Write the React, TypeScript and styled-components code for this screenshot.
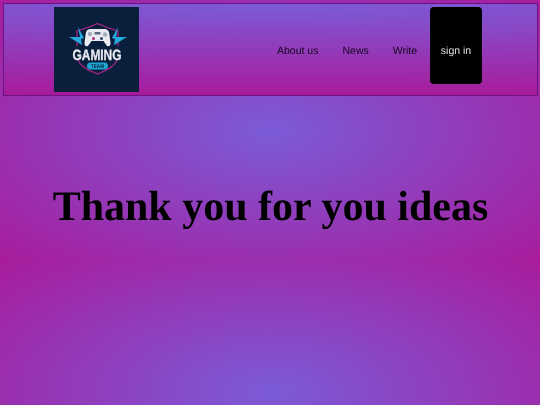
import styled, { createGlobalStyle } from "styled-components";

const GlobalStyle = createGlobalStyle`
	html {
		min-height: 100%;
		background: radial-gradient(ellipse farthest-corner at center, #7b5bd8, #a81c9c) 0 0 / 100% 261px;
	}
	body {
		margin: 3px 2px 3px 3px;
		font-family: "Liberation Sans", Arial, sans-serif;
		text-rendering: geometricPrecision;
	}
`;

const Logo = () => (
	<LogoSvg width="85" height="85" viewBox="0 0 85 85">
		<rect width="85" height="85" fill="#0a1f3c" />
		<path d="M23 39 V24 Q34 21 43.5 16.5 Q53 21 64 24 V39" fill="none" stroke="#b0268e" strokeWidth="1.2" />
		<path d="M24 53 Q27 61 43.5 67 Q60 61 63 53" fill="none" stroke="#b0268e" strokeWidth="1.2" />
		<path d="M24 20 L26 30 L15 30 L28 38 L27 32 L30 31 Z" fill="#25a9dc" />
		<path d="M64 20 L62 30 L73 30 L60 38 L61 32 L58 31 Z" fill="#25a9dc" />
		<path
			d="M36 22 H51 Q55 22 55.5 28 L56.5 36 Q56.5 40 53 39 L49.5 34 H37.5 L34 39 Q30.5 40 30.5 36 L31.5 28 Q32 22 36 22 Z"
			fill="#e9ebf0"
		/>
		<rect x="40.5" y="25" width="6" height="2.5" fill="#5a6a82" />
		<circle cx="36" cy="27" r="2.2" fill="#a3adbd" />
		<circle cx="51" cy="27.5" r="2.2" fill="#a3adbd" />
		<circle cx="39.5" cy="31.5" r="1.5" fill="#a4267f" />
		<circle cx="47.5" cy="31.5" r="1.5" fill="#2a3f6b" />
		<LogoTitle x="43" y="52.5" textLength="49" lengthAdjust="spacingAndGlyphs">
			GAMING
		</LogoTitle>
		<rect x="33" y="55.5" width="21" height="7" rx="3.5" fill="#1ea5d2" />
		<LogoTeam x="43.5" y="61" textLength="13" lengthAdjust="spacingAndGlyphs">
			TEAM
		</LogoTeam>
	</LogoSvg>
);

export default function App() {
	return (
		<>
			<GlobalStyle />
			<Header>
				<LogoBox>
					<Logo />
				</LogoBox>
				<Nav>
					<NavLink>About us</NavLink>
					<NavLink>News</NavLink>
					<NavLink>Write</NavLink>
					<SignIn>sign in</SignIn>
				</Nav>
			</Header>
			<Title>Thank you for you ideas</Title>
		</>
	);
}

const Header = styled.header`
	display: flex;
	align-items: center;
	height: 91px;
	padding-left: 50px;
	border: 1px solid #6d1283;
	background: radial-gradient(ellipse 1600px 90px at 50% 0%, #7b5bd8, #a81c9c);
`;

const LogoBox = styled.div`
	display: flex;
	width: 85px;
	height: 85px;
`;

const LogoSvg = styled.svg`
	filter: blur(0.35px);
`;

const LogoTitle = styled.text`
	font-family: "Liberation Sans", Arial, sans-serif;
	font-size: 15px;
	font-weight: 700;
	fill: #e9ebf0;
	stroke: #e9ebf0;
	stroke-width: 0.3px;
	text-anchor: middle;
`;

const LogoTeam = styled.text`
	font-family: "Liberation Sans", Arial, sans-serif;
	font-size: 5.5px;
	font-weight: 700;
	fill: #0a1f3c;
	text-anchor: middle;
`;

const Nav = styled.nav`
	display: flex;
	align-items: center;
	gap: 24px;
	margin-left: 138px;
	font-size: 10.5px;
	filter: blur(0.25px);
`;

const NavLink = styled.a`
	margin-top: 2px;
	color: #12061c;
`;

const SignIn = styled.a`
	display: flex;
	align-items: center;
	justify-content: center;
	box-sizing: border-box;
	width: 52px;
	height: 77px;
	margin: 0 0 9px -11px;
	padding-top: 11px;
	border-radius: 4px;
	background: #000;
	color: #e0e0e0;
`;

const Title = styled.h1`
	margin: 87px 0 0;
	font-family: "Liberation Serif", "Times New Roman", serif;
	font-size: 42px;
	font-weight: 700;
	line-height: 48px;
	text-align: center;
	color: #000;
	filter: blur(0.3px);
`;
